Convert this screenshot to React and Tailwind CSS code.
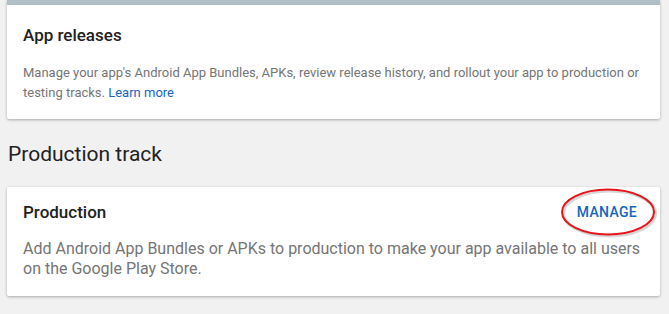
export default function App() {
  return (
    <div className="w-[669px] h-[314px] overflow-hidden bg-[#f1f1f1] font-['Roboto','Liberation_Sans',sans-serif]">
      <div className="px-[7px] pr-[9px]">
        {/* App releases card */}
        <div className="bg-white shadow-[0_1px_3px_rgba(0,0,0,0.3)] rounded-b-[2px]">
          <div className="h-[5px] bg-[#b0bec5]" />
          <div className="px-4 pt-[19px] pb-[16px]">
            <h2 className="text-[17px] leading-[22px] font-medium text-[#212121]">App releases</h2>
            <p className="mt-[17px] text-[13px] leading-[20px] text-[#757575]">
              Manage your app's Android App Bundles, APKs, review release history, and rollout your app to production or
              testing tracks. <a className="text-[#1565c0]">Learn more</a>
            </p>
          </div>
        </div>

        {/* Production track */}
        <h1 className="mt-[21px] ml-[1px] text-[21px] leading-[28px] text-[#212121]">Production track</h1>

        <div className="mt-[19px] bg-white shadow-[0_1px_3px_rgba(0,0,0,0.3)] rounded-[2px] px-4 pt-[14px] pb-[17px]">
          <div className="flex items-center justify-between">
            <h3 className="text-[17px] leading-[22px] font-medium text-[#212121]">Production</h3>
            <div className="relative mr-[7px]">
              <span className="block text-[14px] leading-[20px] font-medium tracking-[0.3px] text-[#1565c0]">MANAGE</span>
              <svg className="absolute left-[-18px] top-[-15px]" width="100" height="52" viewBox="0 0 100 52">
                <ellipse cx="49" cy="25" rx="46" ry="22.5" fill="none" stroke="#bbb" strokeWidth="3" transform="translate(1.5 1.5)" opacity="0.6" />
                <ellipse cx="49" cy="25" rx="46" ry="22.5" fill="none" stroke="#e8141b" strokeWidth="2" />
              </svg>
            </div>
          </div>
          <p className="mt-[16px] text-[16px] leading-[20px] text-[#757575]">
            Add Android App Bundles or APKs to production to make your app available to all users on the Google Play Store.
          </p>
        </div>
      </div>
    </div>
  );
}
